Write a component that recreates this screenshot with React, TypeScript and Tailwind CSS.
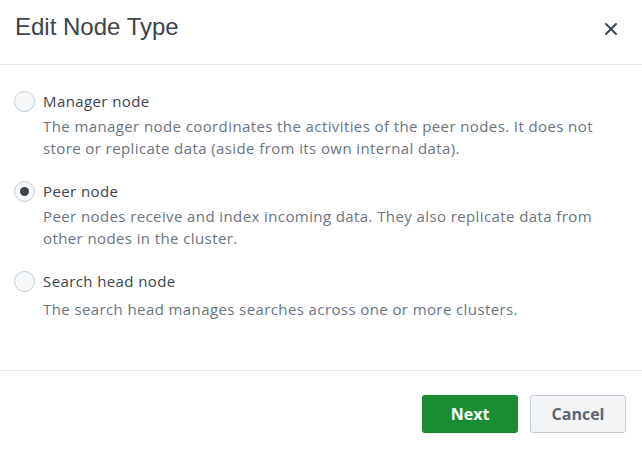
import React, { useState } from 'react';

type NodeType = 'manager' | 'peer' | 'searchhead';

const options: { value: NodeType; label: string; description: string[] }[] = [
  {
    value: 'manager',
    label: 'Manager node',
    description: [
      'The manager node coordinates the activities of the peer nodes. It does not',
      'store or replicate data (aside from its own internal data).',
    ],
  },
  {
    value: 'peer',
    label: 'Peer node',
    description: [
      'Peer nodes receive and index incoming data. They also replicate data from',
      'other nodes in the cluster.',
    ],
  },
  {
    value: 'searchhead',
    label: 'Search head node',
    description: ['The search head manages searches across one or more clusters.'],
  },
];

const App: React.FC = () => {
  const [selected, setSelected] = useState<NodeType>('peer');

  return (
    <div className="w-[642px] h-[451px] bg-white flex flex-col font-['Open_Sans',sans-serif] text-[#3c444d]">
      {/* Header */}
      <div className="h-[65px] flex items-center justify-between pl-[15px] pr-[24px] border-b border-[#e1e6eb] shrink-0">
        <h1 className="text-[24px] font-['Liberation_Sans',sans-serif] text-[#3c444d] pb-[10px]">Edit Node Type</h1>
        <button className="text-[#3c444d] pb-[6px]">
          <svg width="14" height="14" viewBox="0 0 14 14" fill="none" stroke="currentColor" strokeWidth="2" strokeLinecap="round">
            <path d="M2 2L12 12M12 2L2 12" />
          </svg>
        </button>
      </div>

      {/* Body */}
      <div className="flex-1 pl-[14px] pr-[15px] pt-[25px] tracking-[0.4px]">
        {options.map((opt, i) => (
          <div key={opt.value} className="mb-[21px]">
            <label className="flex items-center gap-[8px] cursor-pointer" onClick={() => setSelected(opt.value)}>
              <span className="w-[21px] h-[21px] rounded-full border border-[#c3cbd4] bg-[#f7f8fa] flex items-center justify-center shrink-0">
                {selected === opt.value && <span className="w-[9px] h-[9px] rounded-full bg-[#3c444d]" />}
              </span>
              <span className="text-[15px] leading-[22px] text-[#3c444d]">{opt.label}</span>
            </label>
            <div className={`pl-[29px] text-[15px] leading-[22px] text-[#6b7480] ${i === 2 ? 'mt-[6px]' : 'mt-[3px]'}`}>
              {opt.description.map((line) => (
                <div key={line} className="whitespace-nowrap">{line}</div>
              ))}
            </div>
          </div>
        ))}
      </div>

      {/* Footer */}
      <div className="h-[81px] border-t border-[#e1e6eb] flex items-start justify-end gap-[12px] pt-[24px] pr-[16px] shrink-0">
        <button className="w-[96px] h-[38px] rounded-[3px] bg-[#1a8c34] text-white text-[16px] font-bold">Next</button>
        <button className="w-[96px] h-[38px] rounded-[3px] bg-[#f2f4f5] border border-[#c3cbd4] text-[#5c6773] text-[16px] font-bold">
          Cancel
        </button>
      </div>
    </div>
  );
};

export default App;
